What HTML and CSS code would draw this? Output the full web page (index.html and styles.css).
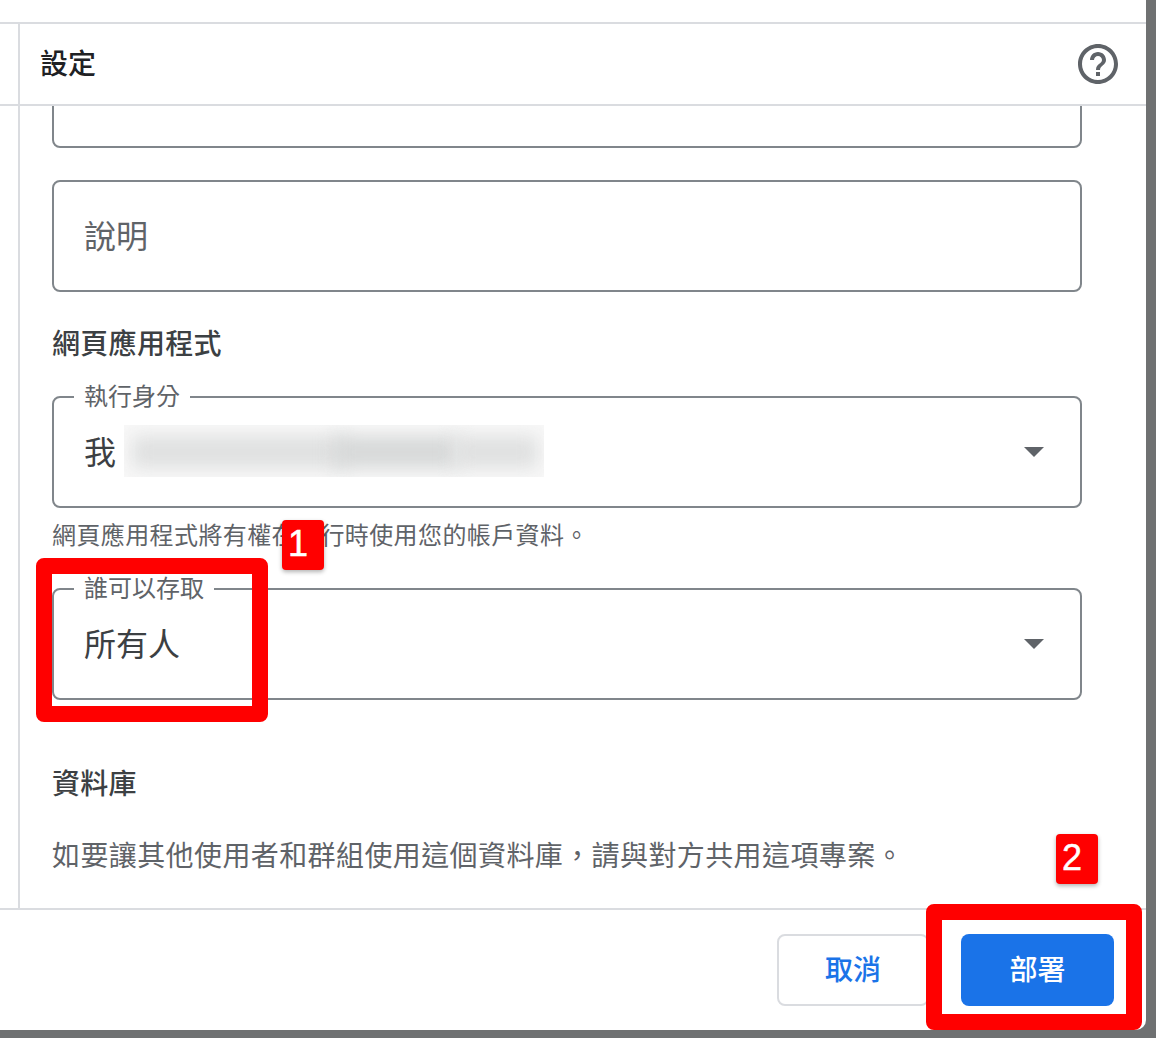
FILE: index.html
```html
<!DOCTYPE html>
<html lang="zh-Hant">
<head>
<meta charset="utf-8">
<title>設定</title>
<link rel="stylesheet" href="styles.css">
</head>
<body>
<div class="dialog">
  <div class="top-strip"></div>
  <header class="header">
    <div class="rail"></div>
    <h1 class="title">設定</h1>
    <svg class="help" viewBox="0 0 24 24" aria-hidden="true"><path d="M11 18h2v-2h-2v2zm1-16C6.48 2 2 6.48 2 12s4.48 10 10 10 10-4.48 10-10S17.52 2 12 2zm0 18c-4.41 0-8-3.59-8-8s3.59-8 8-8 8 3.59 8 8-3.59 8-8 8zm0-14c-2.21 0-4 1.79-4 4h2c0-1.1.9-2 2-2s2 .9 2 2c0 2-3 1.75-3 5h2c0-2.25 3-2.5 3-5 0-2.21-1.79-4-4-4z"/></svg>
  </header>
  <div class="body">
    <div class="rail"></div>
    <main class="content">
      <div class="box box-clipped"></div>
      <div class="box box-desc">說明</div>
      <h2 class="section section-app">網頁應用程式</h2>
      <fieldset class="select select-first">
        <legend class="legend">執行身分</legend>
        <div class="select-row">
          <span class="value">我</span>
          <span class="redacted"><span class="smear smear-a"></span><span class="smear smear-b"></span><span class="smear smear-c"></span></span>
          <svg class="arrow" viewBox="0 0 20 10" aria-hidden="true"><path d="M0 0h20L10 10z"/></svg>
        </div>
      </fieldset>
      <p class="helper">網頁應用程式將有權在執行時使用您的帳戶資料。</p>
      <fieldset class="select select-second">
        <legend class="legend">誰可以存取</legend>
        <div class="select-row">
          <span class="value">所有人</span>
          <svg class="arrow" viewBox="0 0 20 10" aria-hidden="true"><path d="M0 0h20L10 10z"/></svg>
        </div>
      </fieldset>
      <h2 class="section section-db">資料庫</h2>
      <p class="note">如要讓其他使用者和群組使用這個資料庫，請與對方共用這項專案。</p>
    </main>
  </div>
  <footer class="footer">
    <button class="btn btn-cancel" type="button">取消</button>
    <button class="btn btn-deploy" type="button">部署</button>
  </footer>
  <div class="mark mark-access"></div>
  <div class="mark mark-deploy"></div>
  <div class="badge badge-one">1</div>
  <div class="badge badge-two">2</div>
</div>
</body>
</html>
```
FILE: styles.css
```css
* { box-sizing: border-box; }
html, body { margin: 0; height: 100%; }
body {
  background: #6f7172;
  font-family: Roboto, "Noto Sans CJK TC", sans-serif;
  color: #5f6368;
  overflow: hidden;
}
.dialog {
  position: relative;
  width: 1146px;
  height: 1030px;
  background: #fff;
  border-bottom-right-radius: 10px;
  display: flex;
  flex-direction: column;
}
.top-strip { height: 24px; flex: none; border-bottom: 2px solid #dadce0; }
.rail { width: 20px; flex: none; border-right: 2px solid #dadce0; }
.header { height: 82px; flex: none; display: flex; align-items: stretch; border-bottom: 2px solid #dadce0; }
.title {
  margin: 0;
  padding-left: 20px;
  flex: 1;
  font-size: 28px;
  font-weight: 500;
  line-height: 82px;
  color: #202124;
}
.help { width: 48px; height: 48px; margin: 16px 24px 0 0; fill: #5f6368; flex: none; }
.body { height: 802px; flex: none; display: flex; overflow: hidden; }
.content { flex: 1; padding-left: 32px; min-width: 0; }
.box {
  width: 1030px;
  height: 112px;
  border: 2px solid #80868b;
  border-radius: 8px;
}
.box-clipped { margin-top: -70px; }
.box-desc {
  margin-top: 32px;
  padding: 0 30px;
  font-size: 32px;
  line-height: 110px;
  color: #5f6368;
}
.section {
  margin: 0;
  font-size: 28px;
  font-weight: 500;
  line-height: 32px;
  color: #3c4043;
  letter-spacing: .3px;
}
.section-app { margin-top: 37px; }
.section-db { margin-top: 69px; }
.select {
  width: 1030px;
  height: 127px;
  margin: 0;
  padding: 0 36px 0 30px;
  border: 2px solid #80868b;
  border-radius: 8px;
  min-inline-size: 0;
}
.select-first { margin-top: 20px; }
.select-second { margin-top: 21px; }
.legend {
  margin-left: -10px;
  padding: 0 10px;
  font-size: 24px;
  line-height: 32px;
  color: #5f6368;
}
.select-row { display: flex; align-items: center; height: 40px; margin-top: 19px; }
.value { font-size: 32px; line-height: 40px; margin-top: 2px; color: #3c4043; flex: none; }
.redacted {
  position: relative;
  width: 420px;
  height: 52px;
  margin: -3px 0 0 8px;
  background: #f8f8f8;
  overflow: hidden;
  flex: none;
}
.smear {
  position: absolute;
  top: 11px;
  height: 32px;
  background: #d6d8d8;
  filter: blur(9px);
}
.smear-a { left: 8px; width: 215px; background: #dfe0e0; }
.smear-b { left: 210px; width: 125px; }
.smear-c { left: 330px; width: 84px; background: #dfe0e0; }
.arrow { width: 20px; height: 10px; margin-left: auto; fill: #5f6368; flex: none; }
.helper {
  margin: 12px 0 0;
  font-size: 24px;
  line-height: 32px;
  color: #5f6368;
  letter-spacing: .4px;
}
.note {
  margin: 40px 0 0;
  font-size: 28px;
  line-height: 32px;
  color: #5f6368;
  letter-spacing: .4px;
}
.footer {
  flex: 1;
  display: flex;
  justify-content: flex-end;
  align-items: flex-start;
  gap: 32px;
  padding: 24px 32px 0 0;
  border-top: 2px solid #dadce0;
}
.btn {
  height: 72px;
  border-radius: 8px;
  font-family: inherit;
  font-size: 28px;
  font-weight: 500;
  padding: 0 0 4px;
}
.btn-cancel { width: 152px; background: #fff; color: #1a73e8; border: 2px solid #dadce0; }
.btn-deploy { width: 153px; background: #1a73e8; color: #fff; border: 0; }
.mark {
  position: absolute;
  border: 16px solid #f00;
  border-radius: 8px;
}
.mark-access { left: 36px; top: 558px; width: 232px; height: 164px; }
.mark-deploy { left: 926px; top: 904px; width: 216px; height: 126px; }
.badge {
  position: absolute;
  width: 42px;
  height: 50px;
  padding-right: 10px;
  background: #f00;
  border-radius: 4px;
  box-shadow: 0 2px 4px rgba(0,0,0,.3);
  color: #fff;
  font-family: "Liberation Sans", Arial, sans-serif;
  font-size: 36px;
  line-height: 48px;
  text-align: center;
  -webkit-text-stroke: .5px #fff;
}
.badge-one { left: 282px; top: 520px; }
.badge-two { left: 1056px; top: 834px; }
```
